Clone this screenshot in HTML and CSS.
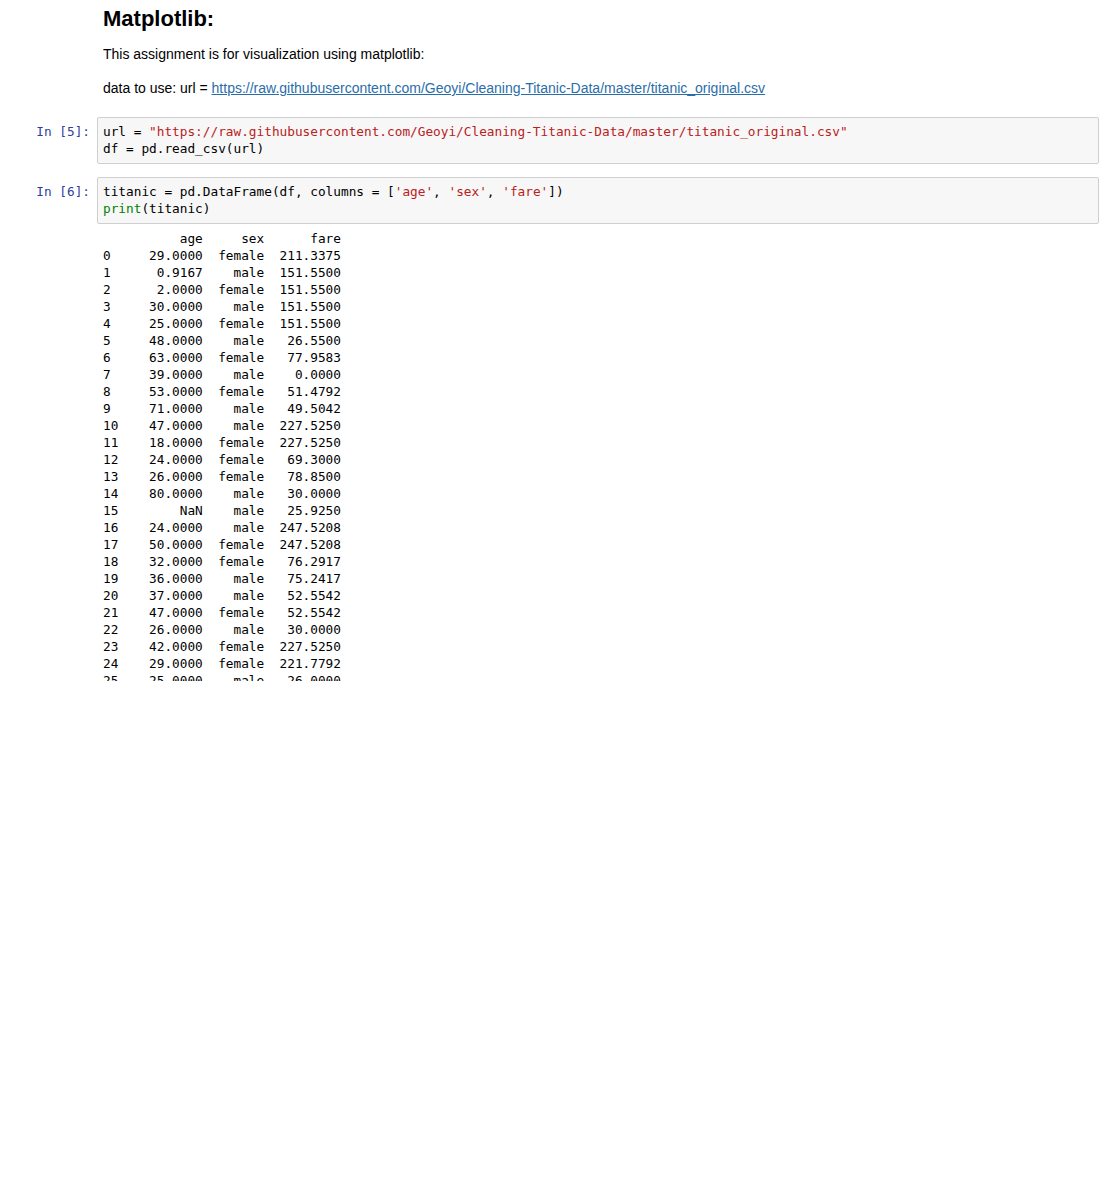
FILE: index.html
```html
<!DOCTYPE html>
<html>
<head>
<meta charset="utf-8">
<link rel="stylesheet" href="styles.css">
<title>Notebook</title>
</head>
<body>
<div class="notebook">
  <div class="cell md-cell">
    <div class="prompt"></div>
    <div class="md">
      <h2 class="md-title">Matplotlib:</h2>
      <p class="md-p first">This assignment is for visualization using matplotlib:</p>
      <p class="md-p">data to use: url = <a class="md-link" href="#">https://raw.githubusercontent.com/Geoyi/Cleaning-Titanic-Data/master/titanic_original.csv</a></p>
    </div>
  </div>

  <div class="cell code-cell cell-5">
    <div class="prompt">In&nbsp;[5]:</div>
    <div class="input-area"><pre class="code">url = <span class="s">"https://raw.githubusercontent.com/Geoyi/Cleaning-Titanic-Data/master/titanic_original.csv"</span>
df = pd.read_csv(url)</pre></div>
  </div>

  <div class="cell code-cell cell-6">
    <div class="prompt">In&nbsp;[6]:</div>
    <div class="input-area"><pre class="code">titanic = pd.DataFrame(df, columns = [<span class="s">'age'</span>, <span class="s">'sex'</span>, <span class="s">'fare'</span>])
<span class="b">print</span>(titanic)</pre></div>
  </div>

  <div class="cell out-cell">
    <div class="prompt"></div>
    <div class="output"><pre class="out">          age     sex      fare
0     29.0000  female  211.3375
1      0.9167    male  151.5500
2      2.0000  female  151.5500
3     30.0000    male  151.5500
4     25.0000  female  151.5500
5     48.0000    male   26.5500
6     63.0000  female   77.9583
7     39.0000    male    0.0000
8     53.0000  female   51.4792
9     71.0000    male   49.5042
10    47.0000    male  227.5250
11    18.0000  female  227.5250
12    24.0000  female   69.3000
13    26.0000  female   78.8500
14    80.0000    male   30.0000
15        NaN    male   25.9250
16    24.0000    male  247.5208
17    50.0000  female  247.5208
18    32.0000  female   76.2917
19    36.0000    male   75.2417
20    37.0000    male   52.5542
21    47.0000  female   52.5542
22    26.0000    male   30.0000
23    42.0000  female  227.5250
24    29.0000  female  221.7792
25    25.0000    male   26.0000
26    19.0000  female   26.0000
27    22.0000    male  135.6333
28    38.0000  female  227.5250</pre></div>
  </div>
</div>
</body>
</html>
```

FILE: styles.css
```css
html, body {
  margin: 0;
  padding: 0;
  background: #ffffff;
}

body {
  font-family: "Liberation Sans", Arial, sans-serif;
  font-size: 14px;
  color: #000000;
}

.notebook {
  width: 1099px;
  display: flex;
  flex-direction: column;
}

.cell {
  display: flex;
  align-items: flex-start;
}

.prompt {
  flex: 0 0 97px;
  box-sizing: border-box;
  padding-right: 7px;
  text-align: right;
  font-family: "DejaVu Sans Mono", "Liberation Mono", monospace;
  font-size: 12.75px;
  line-height: 17px;
  color: #303f9f;
}

.md {
  flex: 1;
  padding-left: 6px;
}

.md-title {
  margin: 6px 0 0;
  font-size: 22px;
  line-height: 26px;
  font-weight: bold;
}

.md-p {
  margin: 14px 0 0;
  line-height: 20px;
}

.md-p.first {
  margin-top: 12px;
}

.md-link {
  color: #296eaa;
  text-decoration: underline;
}

.code-cell .prompt {
  padding-top: 6px;
}

.cell-5 {
  margin-top: 19px;
}

.cell-6 {
  margin-top: 13px;
}

.input-area {
  flex: 1;
  background: #f7f7f7;
  border: 1px solid #cfcfcf;
  border-radius: 2px;
  padding: 5px 5px 6px;
}

.code, .out {
  margin: 0;
  font-family: "DejaVu Sans Mono", "Liberation Mono", monospace;
  font-size: 12.75px;
  line-height: 17px;
  color: #000000;
}

.code .s {
  color: #ba2121;
}

.code .b {
  color: #008000;
}

.out-cell {
  margin-top: 6px;
}

.output {
  flex: 1;
  padding-left: 6px;
  height: 451px;
  overflow: hidden;
}
```
